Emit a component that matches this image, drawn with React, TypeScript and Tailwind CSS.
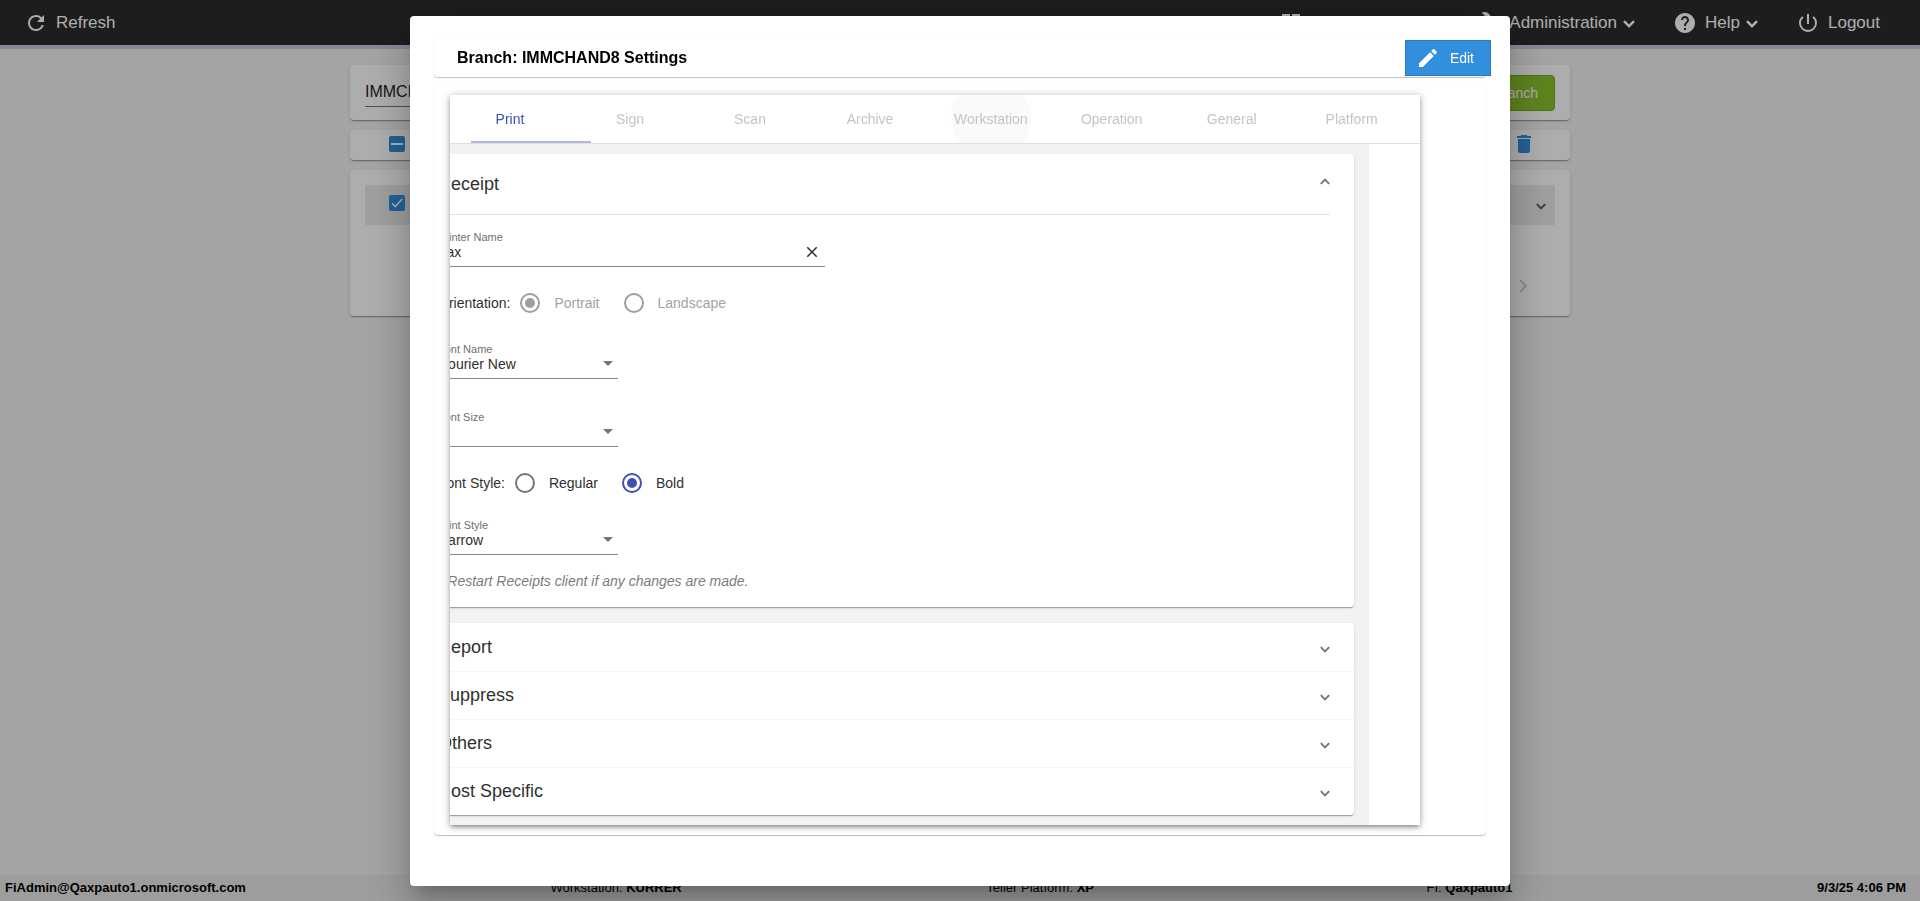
import { useState } from 'react';
import type { ReactNode } from 'react';
import clsx from 'clsx';
import {
  MdArrowDropDown,
  MdBuild,
  MdChevronRight,
  MdClose,
  MdDashboard,
  MdDelete,
  MdEdit,
  MdHelp,
  MdPowerSettingsNew,
  MdRefresh,
} from 'react-icons/md';

const TABS = ['Print', 'Sign', 'Scan', 'Archive', 'Workstation', 'Operation', 'General', 'Platform'];
const SECTIONS = ['Report', 'Suppress', 'Others', 'Host Specific'];

const card =
  'rounded bg-white shadow-[0_2px_1px_-1px_rgba(0,0,0,0.2),0_1px_1px_0_rgba(0,0,0,0.14),0_1px_3px_0_rgba(0,0,0,0.12)]';
const flatCard = 'rounded bg-white shadow-[0_1px_1px_0_rgba(0,0,0,0.24),0_0_2px_0_rgba(0,0,0,0.06)]';

// Short, bold chevron used by menus and expansion panels
function Chevron({ className }: { className: string }) {
  return (
    <svg viewBox="0 0 12 8" fill="none" stroke="currentColor" strokeWidth="2.4" className={className} aria-hidden="true">
      <path d="M1 1.2 6 6.2 11 1.2" />
    </svg>
  );
}

function NavButton({ icon, label, menu }: { icon: ReactNode; label: string; menu?: boolean }) {
  return (
    <button type="button" className="flex items-center text-[17px] leading-5">
      {icon}
      <span className="ml-2">{label}</span>
      {menu && <Chevron className="mx-[6px] mt-[2px] h-2 w-3" />}
    </button>
  );
}

function TopBar() {
  return (
    <header className="flex h-[49px] items-center justify-between border-b-4 border-[#c5cae9] bg-[#2b2b2b] pr-10 pl-6 text-white">
      <NavButton icon={<MdRefresh className="size-6" />} label="Refresh" />
      <nav className="flex items-center gap-8">
        <NavButton icon={<MdDashboard className="size-6" />} label="My Dashboard" menu />
        <NavButton icon={<MdBuild className="size-6" />} label="Administration" menu />
        <NavButton icon={<MdHelp className="size-6" />} label="Help" menu />
        <NavButton icon={<MdPowerSettingsNew className="size-6" />} label="Logout" />
      </nav>
    </header>
  );
}

function BlueCheck({ label, partial }: { label: string; partial?: boolean }) {
  return (
    <label className="relative block size-4">
      <input type="checkbox" aria-label={label} defaultChecked className="block size-4 appearance-none rounded-xs bg-[#318fdd]" />
      <svg viewBox="0 0 16 16" fill="none" stroke="white" className="pointer-events-none absolute inset-0 size-4">
        {partial ? <path d="M2 8h12" strokeWidth="2" /> : <path d="M3 8.2 6.2 11.6 13.2 4" strokeWidth="1.5" />}
      </svg>
    </label>
  );
}

function BranchList() {
  return (
    <main className="mx-auto flex w-full max-w-[1220px] flex-1 flex-col gap-[10px] pt-4">
      <div className={clsx(card, 'flex h-[55px] items-center justify-between px-[15px]')}>
        <input
          aria-label="Search branch"
          defaultValue="IMMCHAND8"
          className="h-7 w-80 border-b border-[#757575] bg-transparent text-base outline-none"
        />
        <button type="button" className="h-9 rounded border border-[#76a621] bg-[#8bc32c] px-4 text-sm text-white">
          Add Branch
        </button>
      </div>
      <div className={clsx(card, 'flex h-[30px] items-center justify-between pr-[34px] pb-[2px] pl-[39px]')}>
        <BlueCheck label="Select all" partial />
        <button type="button" aria-label="Delete">
          <MdDelete className="size-6 text-[#318fdd]" />
        </button>
      </div>
      <div className={clsx(card, 'h-[146px] p-[15px]')}>
        <div className="flex h-10 items-start justify-between bg-[#eaeaea] pt-[10px] pr-[9px] pl-6">
          <BlueCheck label="IMMCHAND8" />
          <button type="button" aria-label="Expand" className="pt-2">
            <Chevron className="h-[7px] w-[10px] text-[#555]" />
          </button>
        </div>
        <div className="mt-12 flex justify-end pr-[19px]">
          <button type="button" aria-label="Next page">
            <MdChevronRight className="size-[26px] text-[#cfcfcf]" />
          </button>
        </div>
      </div>
    </main>
  );
}

function StatusBar() {
  return (
    <footer className="flex h-[26px] items-center justify-between bg-[#e7e8e9] pr-[14px] pl-[5px] text-[13px] text-black">
      <b>FiAdmin@Qaxpauto1.onmicrosoft.com</b>
      <span>
        Workstation: <b>KURRER</b>
      </span>
      <span className="pr-7">
        Teller Platform: <b>XP</b>
      </span>
      <span>
        FI: <b>Qaxpauto1</b>
      </span>
      <b>9/3/25 4:06 PM</b>
    </footer>
  );
}

function Radio({ name, label, checked, disabled }: { name: string; label: string; checked?: boolean; disabled?: boolean }) {
  return (
    <label className={clsx('mr-6 flex items-center gap-[14px]', disabled && 'text-[#a3a3a3]')}>
      <input
        type="radio"
        name={name}
        defaultChecked={checked}
        disabled={disabled}
        className="size-5 appearance-none rounded-full border-2 border-[#757575] bg-white bg-clip-content p-[3px] checked:border-[#3f51b5] checked:bg-[#3f51b5] disabled:border-[#9e9e9e] disabled:checked:bg-[#9e9e9e]"
      />
      {label}
    </label>
  );
}

function SelectField({ id, label, value }: { id: string; label: string; value: string }) {
  return (
    <div className="relative w-[180px]">
      <label htmlFor={id} className="block text-[11px] leading-[14px] text-[#6f6f6f]">
        {label}
      </label>
      <select id={id} defaultValue={value} className="block h-[23px] w-full appearance-none border-b border-[#8a8a8a] bg-transparent pb-[6px] text-sm leading-4 outline-none">
        <option>{value}</option>
      </select>
      <MdArrowDropDown className="pointer-events-none absolute right-[-2px] bottom-1 size-6 text-[#757575]" />
    </div>
  );
}

function ReceiptPanel() {
  return (
    <section className={clsx(card, 'px-6 pb-4')}>
      <div className="flex h-[61px] items-center justify-between border-b border-[#e0e0e0]">
        <h2 className="text-lg">Receipt</h2>
        <button type="button" aria-label="Collapse Receipt" className="pb-[6px]">
          <Chevron className="h-[7px] w-[10px] rotate-180 text-[#757575]" />
        </button>
      </div>
      <div className="relative mt-[15px] w-[387px]">
        <label htmlFor="printer" className="block text-[11px] leading-[14px] text-[#6f6f6f]">
          Printer Name
        </label>
        <input id="printer" defaultValue="Fax" className="block h-[23px] w-full border-b border-[#8a8a8a] bg-transparent pb-[6px] text-sm leading-4 outline-none" />
        <button type="button" aria-label="Clear" className="absolute right-1 bottom-[6px]">
          <MdClose className="size-[18px]" />
        </button>
      </div>
      <div className="mt-[26px] flex h-5 items-center text-sm">
        <span className="mr-[10px]">Orientation:</span>
        <Radio name="orientation" label="Portrait" checked disabled />
        <Radio name="orientation" label="Landscape" disabled />
      </div>
      <div className="mt-[29px] flex flex-col gap-[31px]">
        <SelectField id="font-name" label="Font Name" value="Courier New" />
        <SelectField id="font-size" label="Font Size" value="8" />
      </div>
      <div className="mt-[26px] flex h-5 items-center text-sm">
        <span className="mr-[10px]">Font Style:</span>
        <Radio name="font-style" label="Regular" />
        <Radio name="font-style" label="Bold" checked />
      </div>
      <div className="mt-[25px]">
        <SelectField id="print-style" label="Print Style" value="Narrow" />
      </div>
      <p className="mt-4 text-sm text-[#7c7c7c] italic">* Restart Receipts client if any changes are made.</p>
    </section>
  );
}

function SettingsTabs() {
  const [active, setActive] = useState('Print');

  return (
    <div className="mr-[66px] ml-4 overflow-hidden bg-white shadow-[0_3px_3px_-2px_rgba(0,0,0,0.2),0_3px_4px_0_rgba(0,0,0,0.14),0_1px_8px_0_rgba(0,0,0,0.3)]">
      <div role="tablist" className="relative flex h-[49px] overflow-hidden border-b border-[#e0e0e0]">
        {TABS.map((tab) => (
          <button
            key={tab}
            type="button"
            role="tab"
            aria-selected={tab === active}
            onClick={() => setActive(tab)}
            className={clsx('relative min-w-[120px] px-6 text-sm', tab === active ? 'text-[#3f51b5]' : 'text-[#c4c4c4]')}
          >
            {tab === 'Workstation' && (
              <span className="absolute top-1/2 left-1/2 size-20 -translate-1/2 rounded-full bg-[#fafafa]" />
            )}
            <span className="relative">{tab}</span>
          </button>
        ))}
        <span className="absolute bottom-0 left-[21px] h-[2px] w-[120px] bg-[#b0b8e2]" />
      </div>
      <div className="relative right-[51px] flex flex-col gap-4 bg-[#f2f2f2] px-[15px] py-[10px] text-[#303030]">
        <ReceiptPanel />
        <div className={card}>
          {SECTIONS.map((name) => (
            <div key={name} className="flex h-12 items-center justify-between border-t border-[#f4f4f4] px-6 pb-[2px] first:border-white">
              <h2 className="text-lg">{name}</h2>
              <button type="button" aria-label={`Expand ${name}`} className="pt-[6px]">
                <Chevron className="h-[7px] w-[10px] text-[#757575]" />
              </button>
            </div>
          ))}
        </div>
      </div>
    </div>
  );
}

function SettingsDialog() {
  return (
    <div role="dialog" aria-label="Branch Settings" className="w-full max-w-[1100px] rounded bg-white px-6 pt-6 pb-[51px] shadow-[0_11px_15px_-7px_rgba(0,0,0,0.2),0_24px_38px_3px_rgba(0,0,0,0.14),0_9px_46px_8px_rgba(0,0,0,0.12)]">
      <div className={clsx(flatCard, 'flex h-[37px] items-start justify-between pl-[23px]')}>
        <h1 className="pt-[6px] text-base font-bold text-black">Branch: IMMCHAND8 Settings</h1>
        <button type="button" className="-mr-[5px] flex h-9 items-center gap-[10px] border border-[#2a7bc0] bg-[#318fdd] pr-4 pl-[10px] text-sm text-white">
          <MdEdit className="size-6" />
          Edit
        </button>
      </div>
      <div className={clsx(flatCard, 'mt-2 py-[10px]')}>
        <SettingsTabs />
      </div>
    </div>
  );
}

export default function App() {
  return (
    <div className="flex min-h-screen flex-col bg-[#f2f2f2] font-['Liberation_Sans',Arial,sans-serif] text-[#222]">
      <TopBar />
      <BranchList />
      <StatusBar />
      <div className="fixed inset-0 flex items-start justify-center overflow-hidden bg-black/32 pt-4">
        <SettingsDialog />
      </div>
    </div>
  );
}
